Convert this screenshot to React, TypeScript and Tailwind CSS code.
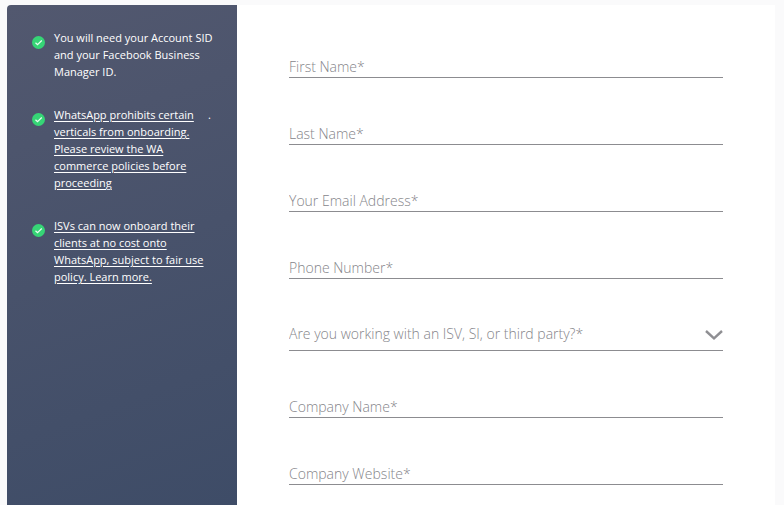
import { Fragment } from "react";

const notes = [
  {
    lines: ["You will need your Account SID", "and your Facebook Business", "Manager ID."],
  },
  {
    href: "#commerce-policies",
    lines: [
      "WhatsApp prohibits certain",
      "verticals from onboarding.",
      "Please review the WA",
      "commerce policies before",
      "proceeding",
    ],
    trailing: ".",
  },
  {
    href: "#fair-use",
    lines: [
      "ISVs can now onboard their",
      "clients at no cost onto",
      "WhatsApp, subject to fair use",
      "policy. Learn more.",
    ],
  },
];

const fields = [
  { name: "firstName", label: "First Name*", type: "text" },
  { name: "lastName", label: "Last Name*", type: "text" },
  { name: "email", label: "Your Email Address*", type: "email" },
  { name: "phone", label: "Phone Number*", type: "tel" },
  { name: "partner", label: "Are you working with an ISV, SI, or third party?*", type: "select" },
  { name: "company", label: "Company Name*", type: "text" },
  { name: "website", label: "Company Website*", type: "text" },
];

function CheckBadge() {
  return (
    <svg viewBox="0 0 26 26" className="mt-[7px] size-[13px] shrink-0" aria-hidden="true">
      <circle cx="13" cy="13" r="13" fill="#36d576" />
      <path d="M7 13.5l4 4 8.5-8.5" fill="none" stroke="#e9fff1" strokeWidth="2.4" />
    </svg>
  );
}

function NoteText({ lines }: { lines: string[] }) {
  return (
    <>
      {lines.map((line, i) => (
        <Fragment key={line}>
          {i > 0 && <br />}
          {line}
        </Fragment>
      ))}
    </>
  );
}

function Sidebar() {
  return (
    <aside className="w-[230px] shrink-0 rounded-tl-sm bg-linear-160 from-[#52586f] to-[#3e4c67] pt-6 pr-[26px] pl-[25px]">
      <ul className="space-y-[26px] text-[11px] leading-[17px] text-white">
        {notes.map((note) => (
          <li key={note.lines[0]} className="flex gap-[9px]">
            <CheckBadge />
            <div className="flex flex-1 justify-between whitespace-nowrap">
              {note.href ? (
                <a href={note.href} className="underline underline-offset-2">
                  <NoteText lines={note.lines} />
                </a>
              ) : (
                <p>
                  <NoteText lines={note.lines} />
                </p>
              )}
              {note.trailing && <span>{note.trailing}</span>}
            </div>
          </li>
        ))}
      </ul>
    </aside>
  );
}

function Field({ name, label, type }: { name: string; label: string; type: string }) {
  if (type === "select") {
    return (
      <div className="relative">
        <select
          name={name}
          aria-label={label}
          defaultValue=""
          className="block h-[30px] w-full appearance-none border-b border-[#8c8c90] bg-transparent pb-1 text-[#85858a] outline-none"
        >
          <option value="">{label}</option>
          <option value="yes">Yes</option>
          <option value="no">No</option>
        </select>
        <svg
          viewBox="0 0 18 10"
          className="pointer-events-none absolute top-[9px] right-0 h-[10px] w-[18px]"
          fill="none"
          stroke="#8f8f93"
          strokeWidth="2.4"
          aria-hidden="true"
        >
          <path d="M1 1l8 7.3L17 1" />
        </svg>
      </div>
    );
  }

  return (
    <input
      name={name}
      type={type}
      aria-label={label}
      placeholder={label}
      className="block h-[25px] w-full border-b border-[#8c8c90] bg-transparent pt-0.5 text-[#85858a] outline-none placeholder:text-[#85858a]"
    />
  );
}

export default function App() {
  return (
    <div className="flex min-h-screen bg-[#fafafb] pt-[5px] pr-[9px] pl-[7px] font-['Open_Sans',sans-serif]">
      <Sidebar />
      <main className="flex-1 bg-white px-[52px] pt-12">
        <form className="space-y-[42px] pb-5 text-sm font-light">
          {fields.map((field) => (
            <Field key={field.name} {...field} />
          ))}
        </form>
      </main>
    </div>
  );
}
